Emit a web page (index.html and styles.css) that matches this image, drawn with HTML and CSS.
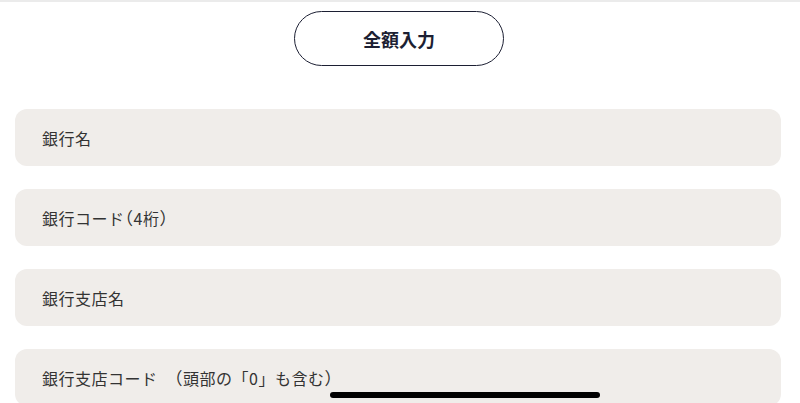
FILE: index.html
```html
<!DOCTYPE html>
<html lang="ja">
<head>
<meta charset="utf-8">
<link rel="stylesheet" href="styles.css">
</head>
<body>
<div class="page">
  <div class="top-rule"></div>
  <div class="btn-row">
    <button class="full-btn">全額入力</button>
  </div>
  <div class="fields">
    <div class="field">銀行名</div>
    <div class="field">銀行コード<span class="paren">（</span>4桁<span class="paren">）</span></div>
    <div class="field">銀行支店名</div>
    <div class="field">銀行支店コード　<span class="paren">（</span>頭部の「0」も含む<span class="paren">）</span></div>
  </div>
  <div class="home-indicator"></div>
</div>
</body>
</html>
```
FILE: styles.css
```css
html, body {
  margin: 0;
  padding: 0;
  background: #ffffff;
}
body {
  font-family: "Noto Sans CJK JP", "Noto Sans", sans-serif;
  color: #333333;
  overflow: hidden;
}
.page {
  position: relative;
  width: 800px;
  height: 403px;
  overflow: hidden;
}
.top-rule {
  height: 2px;
  background: #ebebeb;
}
.btn-row {
  display: flex;
  justify-content: center;
  padding-top: 9px;
}
.full-btn {
  width: 210px;
  height: 55px;
  margin-left: -2px;
  border: 1.6px solid #1c1f33;
  border-radius: 28px;
  background: #ffffff;
  font-family: "Noto Sans CJK JP", sans-serif;
  font-size: 18px;
  font-weight: 700;
  color: #1c1f33;
  padding: 0;
}
.fields {
  display: flex;
  flex-direction: column;
  gap: 23px;
  padding: 43px 19px 0 15px;
}
.field {
  height: 57px;
  box-sizing: border-box;
  background: #f0edea;
  border-radius: 12px;
  padding-left: 27px;
  display: flex;
  align-items: center;
  font-size: 16px;
  letter-spacing: 0.5px;
  color: #333333;
  white-space: pre;
}
.paren {
  font-feature-settings: "halt";
  font-size: 17px;
}
.home-indicator {
  position: absolute;
  left: 330px;
  top: 392px;
  width: 270px;
  height: 6px;
  border-radius: 3px;
  background: #000000;
}
```
